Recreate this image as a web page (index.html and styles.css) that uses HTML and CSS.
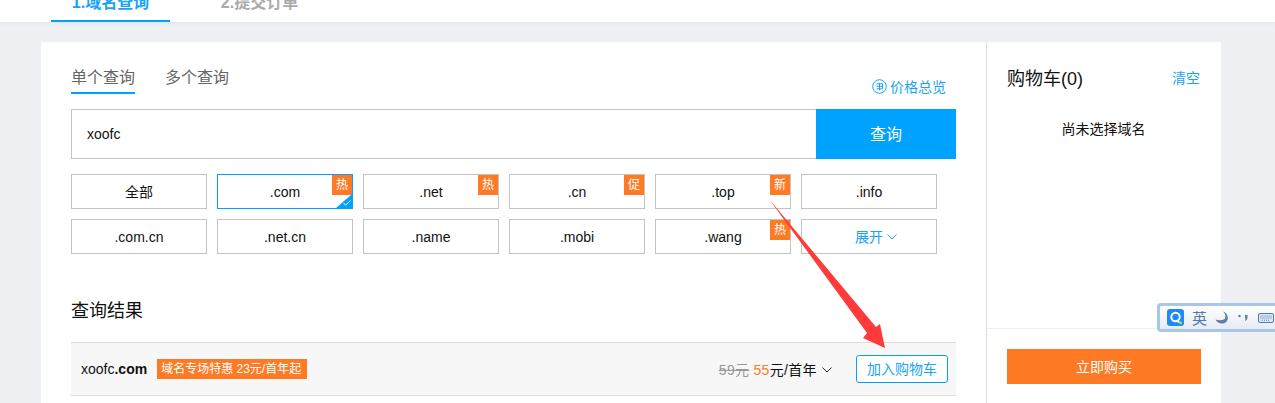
FILE: index.html
```html
<!DOCTYPE html>
<html lang="zh-CN">
<head>
    <meta charset="UTF-8">
    <title>域名查询</title>
    <link rel="stylesheet" href="styles.css">
</head>
<body>
    <div class="top-bar">
        <div class="step step-active">1.域名查询</div>
        <div class="step">2.提交订单</div>
    </div>

    <div class="main-card">
        <div class="left-panel">
            <div class="query-head">
                <div class="query-tabs">
                    <span class="query-tab query-tab-active">单个查询</span>
                    <span class="query-tab">多个查询</span>
                </div>
                <a class="price-link">
                    <svg class="price-icon" width="15" height="15" viewBox="0 0 15 15" fill="none" stroke="#1aa3f5" stroke-width="1">
                        <circle cx="7.500" cy="7.500" r="6.800"/>
                        <path d="M4.500 4.800h6v5h-6M4.500 7.300h6M7.500 3.800v7.600"/>
                    </svg>
                    价格总览
                </a>
            </div>

            <div class="search-row">
                <div class="search-input">xoofc</div>
                <button class="search-btn">查询</button>
            </div>

            <div class="suffix-grid">
                <div class="suffix">全部</div>
                <div class="suffix suffix-on">.com<span class="badge">热</span><span class="corner"></span>
                    <svg class="corner-check" width="8" height="6" viewBox="0 0 8 6" fill="none" stroke="#fff" stroke-width="1"><path d="M0.500 3l2.200 2.200L7.500 0.500"/></svg>
                </div>
                <div class="suffix">.net<span class="badge">热</span></div>
                <div class="suffix">.cn<span class="badge">促</span></div>
                <div class="suffix">.top<span class="badge">新</span></div>
                <div class="suffix">.info</div>
                <div class="suffix">.com.cn</div>
                <div class="suffix">.net.cn</div>
                <div class="suffix">.name</div>
                <div class="suffix">.mobi</div>
                <div class="suffix">.wang<span class="badge">热</span></div>
                <div class="suffix suffix-more">展开
                    <svg width="10" height="6" viewBox="0 0 10 6" fill="none" stroke="#1aa3f5" stroke-width="1"><path d="M0.500 0.500L5 5l4.500-4.500"/></svg>
                </div>
            </div>

            <h2 class="result-title">查询结果</h2>

            <div class="result-row">
                <span class="domain">xoofc<b>.com</b></span>
                <span class="promo">域名专场特惠 23元/首年起</span>
                <span class="price">
                    <s>59元</s>
                    <em>55</em>元/首年
                    <svg width="10" height="6" viewBox="0 0 10 6" fill="none" stroke="#333" stroke-width="1"><path d="M0.500 0.500L5 5l4.500-4.500"/></svg>
                </span>
                <button class="add-btn">加入购物车</button>
            </div>
        </div>

        <div class="cart-panel">
            <div class="cart-top">
                <div class="cart-head">
                    <span class="cart-title">购物车(0)</span>
                    <a class="cart-clear">清空</a>
                </div>
                <div class="cart-empty">尚未选择域名</div>
            </div>
            <div class="cart-bottom">
                <button class="buy-btn">立即购买</button>
            </div>
        </div>
    </div>

    <!-- red arrow pasted on top of the screenshot -->
    <svg class="arrow" width="130" height="160" viewBox="0 0 130 160">
        <path d="M1 1L108 129L112 126L117 150L95 140L99 135Z" fill="#ff3a3a"/>
    </svg>

    <!-- input method bar -->
    <div class="ime-bar">
        <svg class="ime-logo" width="17" height="17" viewBox="0 0 17 17">
            <rect width="17" height="17" rx="3" fill="#1c8bf5"/>
            <circle cx="8.500" cy="8" r="4.200" fill="none" stroke="#fff" stroke-width="2"/>
            <path d="M10 11l2 2.500" stroke="#fff" stroke-width="1.800"/>
            <circle cx="13.500" cy="13.800" r="1.500" fill="#a5e635"/>
        </svg>
        <span class="ime-lang">英</span>
        <svg width="13" height="13" viewBox="0 0 13 13"><path d="M8 0.500C10.500 3 11 5 10 7.500C8.500 9.500 4 9.500 0.500 8.500C2 11.500 5 13 8 12.500C11.500 12 13 9 12.800 6.500C12.500 3.500 10.500 1 8 0.500Z" fill="#5b7fae"/></svg>
        <svg class="ime-punct" width="10" height="8" viewBox="0 0 10 8"><circle cx="1.500" cy="2" r="1.200" fill="#5b7fae"/><path d="M7 1h2.500v2.500C9.500 5 8.500 6.500 7 7l0.500-3H7z" fill="#5b7fae"/></svg>
        <svg width="16" height="10" viewBox="0 0 16 10"><rect x="0.500" y="0.500" width="15" height="9" rx="1.500" fill="#dfe9f5" stroke="#4f7cae"/><path d="M2.500 3h11M2.500 5h11M4 7.200h8" stroke="#4f7cae" stroke-dasharray="1 1"/></svg>
    </div>
</body>
</html>
```

FILE: styles.css
```css
* {
    box-sizing: border-box;
}

html, body {
    height: 403px;
    overflow: hidden;
}

body {
    margin: 0;
    position: relative;
    background-color: #eff0f4;
    color: #111;
    font-family: "Liberation Sans", "Noto Sans CJK SC", sans-serif;
    font-size: 14px;
}

button {
    font-family: inherit;
    border: none;
    padding: 0 0 2px;
    cursor: pointer;
}

/* top steps */
.top-bar {
    height: 22px;
    padding-left: 51px;
    display: flex;
    align-items: flex-end;
    overflow: hidden;
    background-color: #fff;
    box-shadow: 0 1px 6px rgba(0,0,0,0.06);
}

.step {
    flex: none;
    width: 119px;
    height: 47px;
    line-height: 56px;
    text-align: center;
    margin-right: 30px;
    font-size: 16px;
    font-weight: bold;
    color: #aaa;
}

.step-active {
    color: #1aa3f5;
    border-bottom: 2px solid #00a2ff;
}

/* main card */
.main-card {
    width: 1180px;
    height: 361px;
    margin: 20px 0 0 41px;
    display: flex;
    background-color: #fff;
}

.left-panel {
    width: 946px;
    padding: 22px 30px 0;
    border-right: 1px solid #dcdcdc;
}

.query-head {
    display: flex;
    justify-content: space-between;
    align-items: flex-end;
    height: 30px;
    padding-right: 10px;
}

.query-tabs {
    display: flex;
    gap: 30px;
    height: 30px;
}

.query-tab {
    height: 30px;
    line-height: 28px;
    font-size: 16px;
    color: #666;
}

.query-tab-active {
    border-bottom: 2px solid #00a2ff;
}

.price-link {
    display: flex;
    align-items: center;
    gap: 3px;
    height: 20px;
    margin-bottom: -2px;
    font-size: 14px;
    color: #1aa3f5;
}

.search-row {
    display: flex;
    height: 50px;
    margin-top: 15px;
}

.search-input {
    flex: 1;
    padding-left: 15px;
    line-height: 48px;
    border: 1px solid #c3c3c3;
    border-right: none;
    font-size: 14px;
}

.search-btn {
    width: 140px;
    background-color: #00a2ff;
    color: #fff;
    font-size: 16px;
}

.suffix-grid {
    display: grid;
    grid-template-columns: repeat(6, 136px);
    grid-auto-rows: 35px;
    gap: 10px;
    margin-top: 15px;
}

.suffix {
    position: relative;
    line-height: 35px;
    text-align: center;
    border: 1px solid #c3c3c3;
}

.suffix-on {
    border-color: #00a2ff;
}

.suffix-more {
    padding-left: 14px;
    color: #1aa3f5;
}

.suffix-more svg {
    vertical-align: 2px;
}

.badge {
    position: absolute;
    top: 0;
    right: 0;
    width: 20px;
    height: 20px;
    line-height: 20px;
    text-align: center;
    font-size: 12px;
    color: #fff;
    background-color: #ff7a25;
}

.corner {
    position: absolute;
    right: 0;
    bottom: 0;
    width: 0;
    height: 0;
    border-left: 16px solid transparent;
    border-bottom: 14px solid #00a2ff;
}

.corner-check {
    position: absolute;
    right: 1px;
    bottom: 2px;
}

.result-title {
    margin: 43px 0 0;
    height: 45px;
    line-height: 28px;
    font-size: 18px;
    font-weight: normal;
}

.result-row {
    display: flex;
    align-items: center;
    height: 54px;
    padding: 0 8px 0 10px;
    background-color: #f7f7f7;
    border-top: 1px solid #ddd;
    border-bottom: 1px solid #ddd;
}

.domain {
    font-size: 14px;
}

.promo {
    margin-left: 10px;
    height: 20px;
    line-height: 21px;
    padding: 0 6px 0 4px;
    font-size: 12px;
    color: #fff;
    background-color: #ff7a25;
}

.price {
    margin-left: auto;
    margin-right: 24px;
    font-size: 14px;
    letter-spacing: 0.3px;
}

.price s {
    color: #999;
}

.price em {
    font-style: normal;
    color: #ff7a25;
}

.price svg {
    margin-left: 1px;
    vertical-align: 2px;
}

.add-btn {
    width: 92px;
    height: 28px;
    background-color: #fff;
    border: 1px solid #00a2ff;
    border-radius: 3px;
    color: #1aa3f5;
    font-size: 14px;
}

/* cart */
.cart-panel {
    flex: 1;
    display: flex;
    flex-direction: column;
}

.cart-top {
    height: 287px;
    padding: 22px 21px 0 20px;
    border-bottom: 1px solid #eee;
}

.cart-head {
    display: flex;
    justify-content: space-between;
    align-items: center;
    height: 26px;
}

.cart-title {
    font-size: 18px;
}

.cart-clear {
    font-size: 14px;
    color: #1aa3f5;
}

.cart-empty {
    margin-top: 28px;
    text-align: center;
    font-size: 14px;
}

.cart-bottom {
    padding: 20px 20px 0;
}

.buy-btn {
    display: block;
    width: 194px;
    height: 35px;
    background-color: #ff7a25;
    color: #fff;
    font-size: 14px;
}

/* overlays */
.arrow {
    position: absolute;
    left: 768px;
    top: 198px;
}

.ime-bar {
    position: absolute;
    left: 1157px;
    top: 303px;
    width: 124px;
    height: 29px;
    padding-left: 7px;
    display: flex;
    align-items: center;
    gap: 8px;
    border: 3px solid #a9c6e8;
    border-radius: 4px;
    background: linear-gradient(#fff, #e6ebf2);
}

.ime-lang {
    font-size: 15px;
    color: #4f7cae;
}

.ime-punct {
    margin: 0 2px;
}
```
